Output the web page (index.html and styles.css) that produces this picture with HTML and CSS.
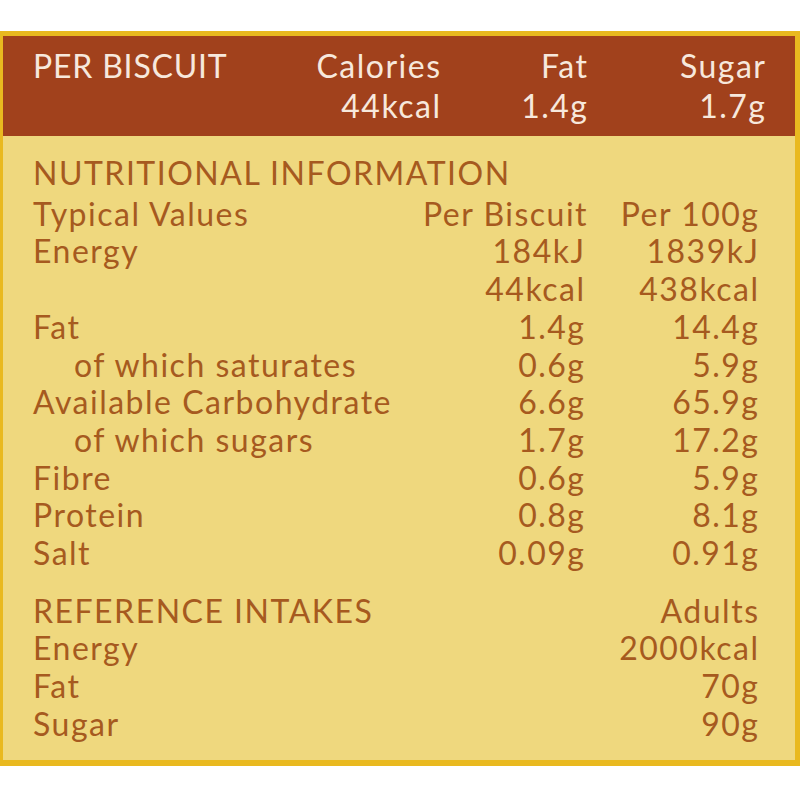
FILE: index.html
```html
<!DOCTYPE html>
<html>
<head>
<meta charset="utf-8">
<link rel="stylesheet" href="styles.css">
</head>
<body>
<div class="label">
  <div class="header">
    <div class="hrow">
      <span class="hlabel">PER BISCUIT</span>
      <span class="hnum">Calories</span>
      <span class="hnum">Fat</span>
      <span class="hnum">Sugar</span>
    </div>
    <div class="hrow">
      <span class="hlabel"></span>
      <span class="hnum">44kcal</span>
      <span class="hnum">1.4g</span>
      <span class="hnum">1.7g</span>
    </div>
  </div>
  <div class="body">
    <div class="title">NUTRITIONAL INFORMATION</div>
    <div class="table">
      <div class="row"><span>Typical Values</span><span class="num">Per Biscuit</span><span class="num">Per 100g</span></div>
      <div class="row"><span>Energy</span><span class="num">184kJ</span><span class="num">1839kJ</span></div>
      <div class="row"><span></span><span class="num">44kcal</span><span class="num">438kcal</span></div>
      <div class="row"><span>Fat</span><span class="num">1.4g</span><span class="num">14.4g</span></div>
      <div class="row"><span class="sub">of which saturates</span><span class="num">0.6g</span><span class="num">5.9g</span></div>
      <div class="row"><span>Available Carbohydrate</span><span class="num">6.6g</span><span class="num">65.9g</span></div>
      <div class="row"><span class="sub">of which sugars</span><span class="num">1.7g</span><span class="num">17.2g</span></div>
      <div class="row"><span>Fibre</span><span class="num">0.6g</span><span class="num">5.9g</span></div>
      <div class="row"><span>Protein</span><span class="num">0.8g</span><span class="num">8.1g</span></div>
      <div class="row"><span>Salt</span><span class="num">0.09g</span><span class="num">0.91g</span></div>
    </div>
    <div class="table ref">
      <div class="row"><span>REFERENCE INTAKES</span><span></span><span class="num">Adults</span></div>
      <div class="row"><span>Energy</span><span></span><span class="num">2000kcal</span></div>
      <div class="row"><span>Fat</span><span></span><span class="num">70g</span></div>
      <div class="row"><span>Sugar</span><span></span><span class="num">90g</span></div>
    </div>
  </div>
</div>
</body>
</html>
```

FILE: styles.css
```css
html, body {
  margin: 0;
  padding: 0;
  background: #ffffff;
}

body {
  font-family: Lato, "Open Sans", sans-serif;
  font-size: 32px;
  letter-spacing: 1.5px;
}

.label {
  margin-top: 31px;
  height: 724px;
  border-style: solid;
  border-color: #e9b91f;
  border-width: 5px 5px 6px 3px;
  background: #efd87e;
  display: flex;
  flex-direction: column;
}

.header {
  background: #a1411c;
  color: #f7e8dc;
  height: 100px;
  box-sizing: border-box;
  padding: 10px 30px 0 30px;
}

.hrow {
  display: grid;
  grid-template-columns: 1fr 160px 147px 178px;
  line-height: 40px;
}

.hlabel {
  letter-spacing: 0.8px;
}

.hnum {
  text-align: right;
  margin-right: -1.5px;
}

.body {
  color: #a65a1f;
  padding: 18px 37px 0 30px;
}

.title {
  line-height: 37.7px;
  margin-bottom: 3px;
}

.table .row {
  display: grid;
  grid-template-columns: 1fr 161px 174px;
  line-height: 37.7px;
}

.num {
  text-align: right;
  white-space: nowrap;
  margin-right: -1.5px;
}

.sub {
  padding-left: 41px;
}

.ref {
  margin-top: 20px;
}
```
